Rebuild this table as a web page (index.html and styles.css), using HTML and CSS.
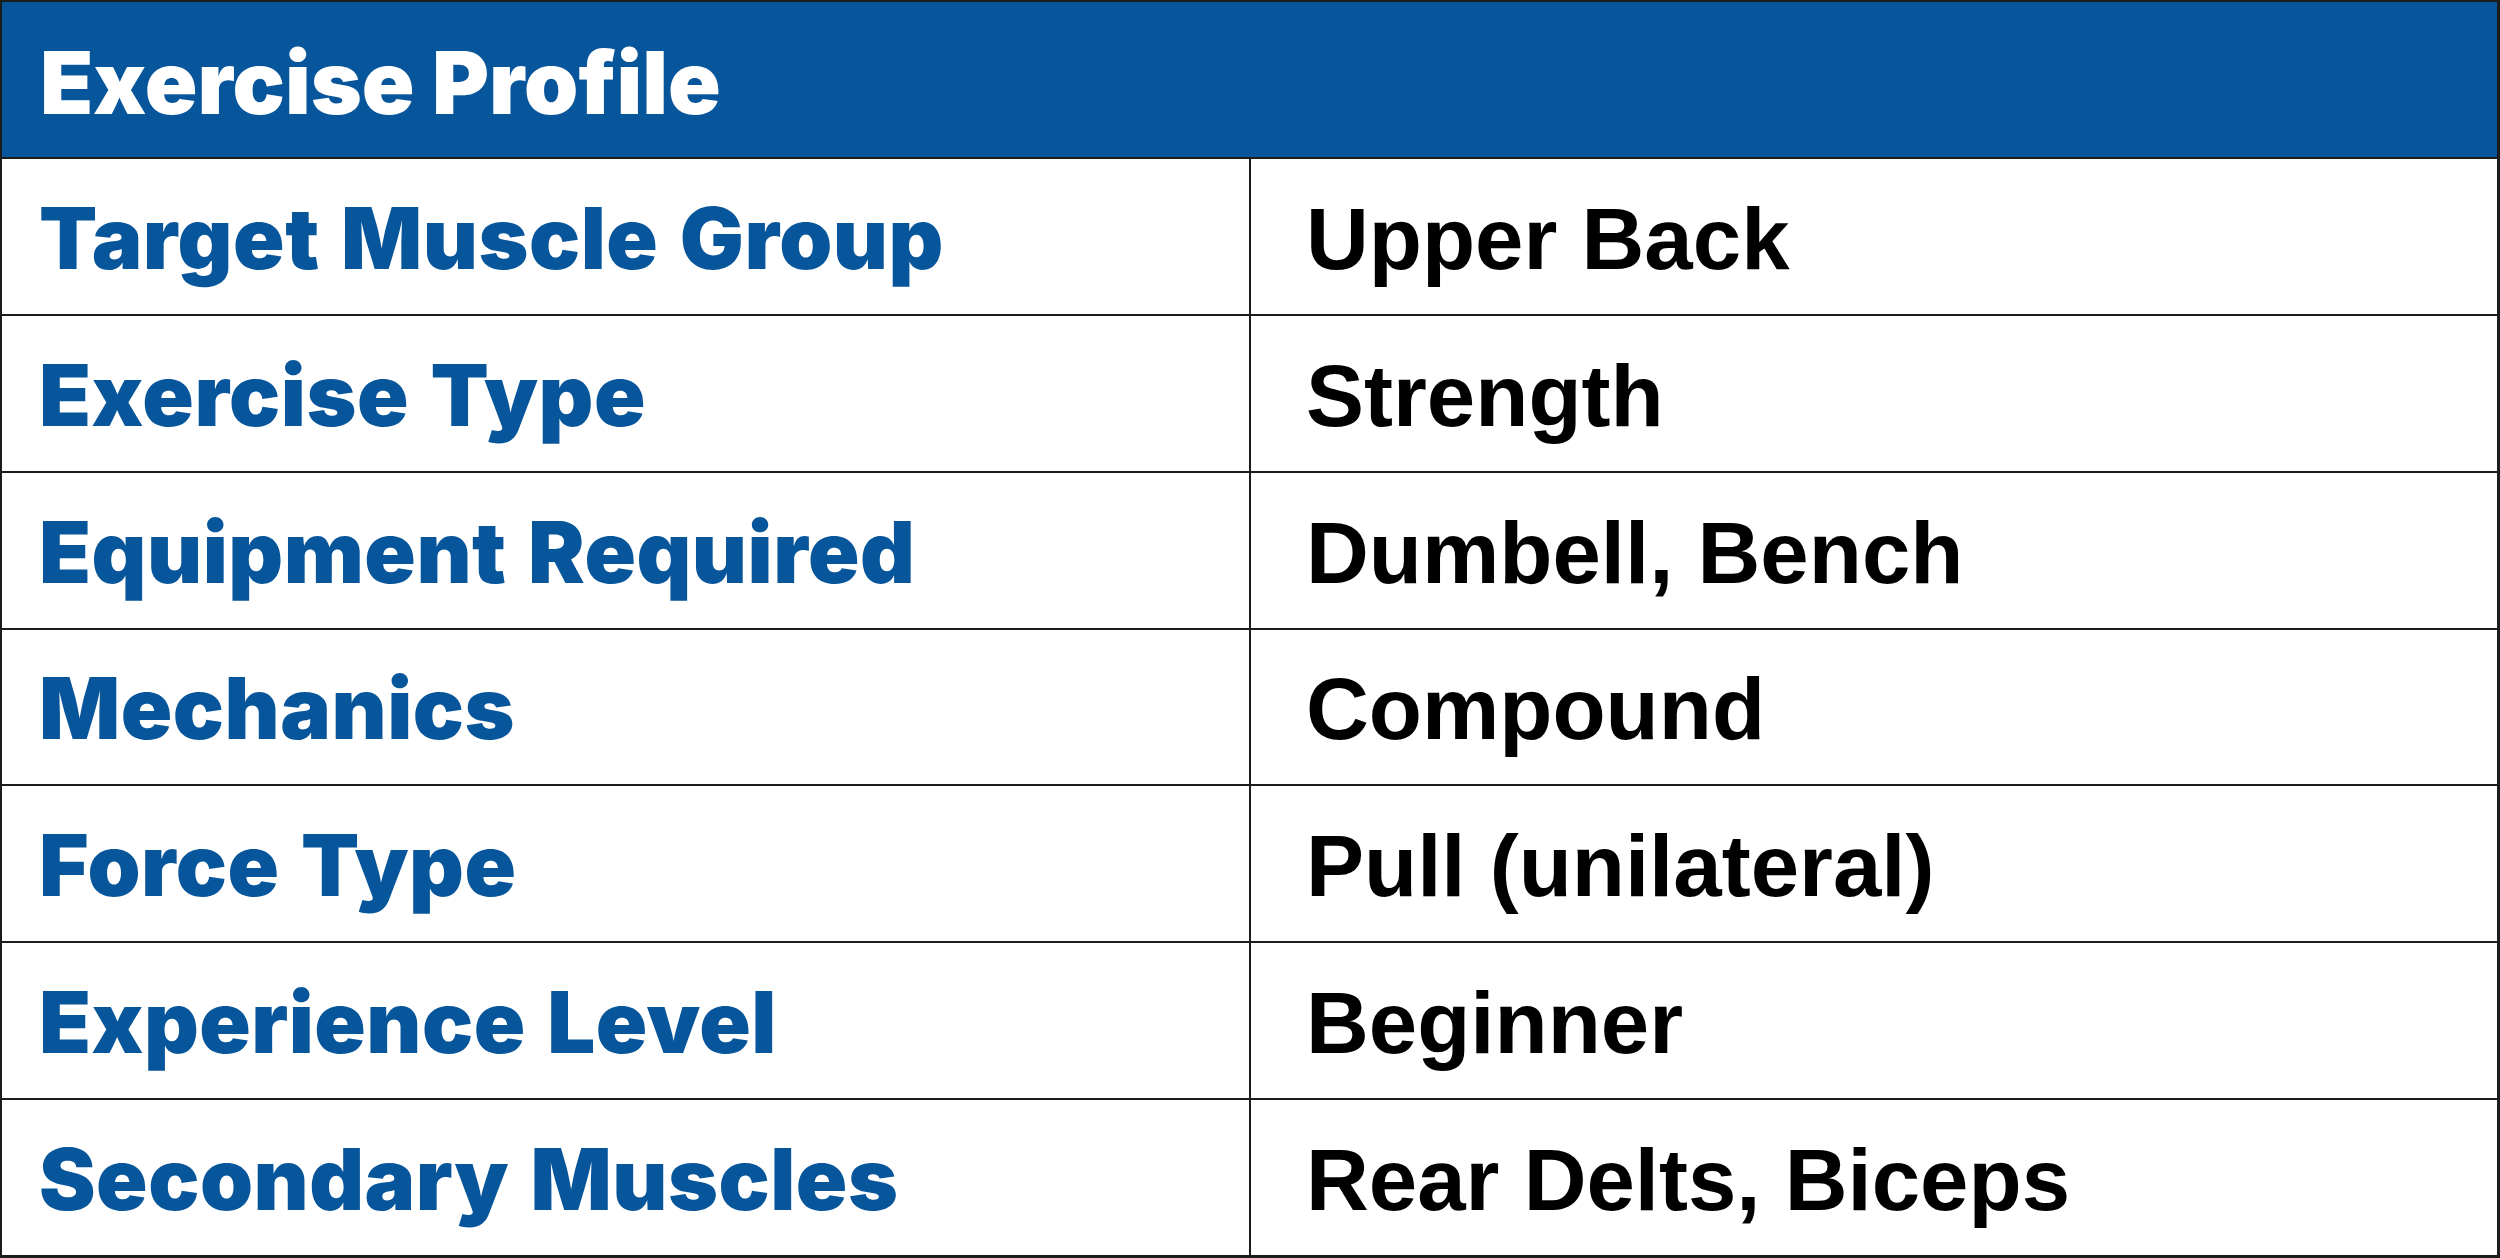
FILE: index.html
```html
<!DOCTYPE html>
<html lang="en">
<head>
<meta charset="utf-8">
<title>Exercise Profile</title>
<link rel="stylesheet" href="styles.css">
</head>
<body>
<div class="profile">
  <div class="head">Exercise Profile</div>
  <div class="label">Target Muscle Group</div><div class="value">Upper Back</div>
  <div class="label">Exercise Type</div><div class="value">Strength</div>
  <div class="label">Equipment Required</div><div class="value">Dumbell, Bench</div>
  <div class="label">Mechanics</div><div class="value">Compound</div>
  <div class="label">Force Type</div><div class="value">Pull (unilateral)</div>
  <div class="label">Experience Level</div><div class="value">Beginner</div>
  <div class="label">Secondary Muscles</div><div class="value">Rear Delts, Biceps</div>
</div>
</body>
</html>
```

FILE: styles.css
```css
html, body {
  margin: 0;
  padding: 0;
  background: #ffffff;
}
.profile {
  width: 2500px;
  height: 1258px;
  box-sizing: border-box;
  padding: 2px 3px 3px 2px;
  background: #1c1c1c;
  display: grid;
  grid-template-columns: 1247px 1fr;
  grid-template-rows: repeat(8, 1fr);
  gap: 2px;
}
.head {
  grid-column: 1 / 3;
  background: #07559b;
  color: #ffffff;
  font-family: Inter, "Liberation Sans", sans-serif;
  font-weight: 900;
  font-size: 87px;
  line-height: 1;
  display: flex;
  align-items: center;
  padding: 6px 0 0 38px;
}
.label {
  background: #ffffff;
  color: #07559b;
  font-family: Inter, "Liberation Sans", sans-serif;
  font-weight: 900;
  font-size: 85px;
  letter-spacing: 0.5px;
  word-spacing: 4px;
  line-height: 1;
  display: flex;
  align-items: center;
  padding: 4px 0 0 37px;
}
.value {
  background: #ffffff;
  color: #000000;
  font-family: "Liberation Sans", Arial, sans-serif;
  font-weight: 700;
  font-size: 87px;
  line-height: 1;
  display: flex;
  align-items: center;
  padding: 4px 0 0 55px;
}
```
